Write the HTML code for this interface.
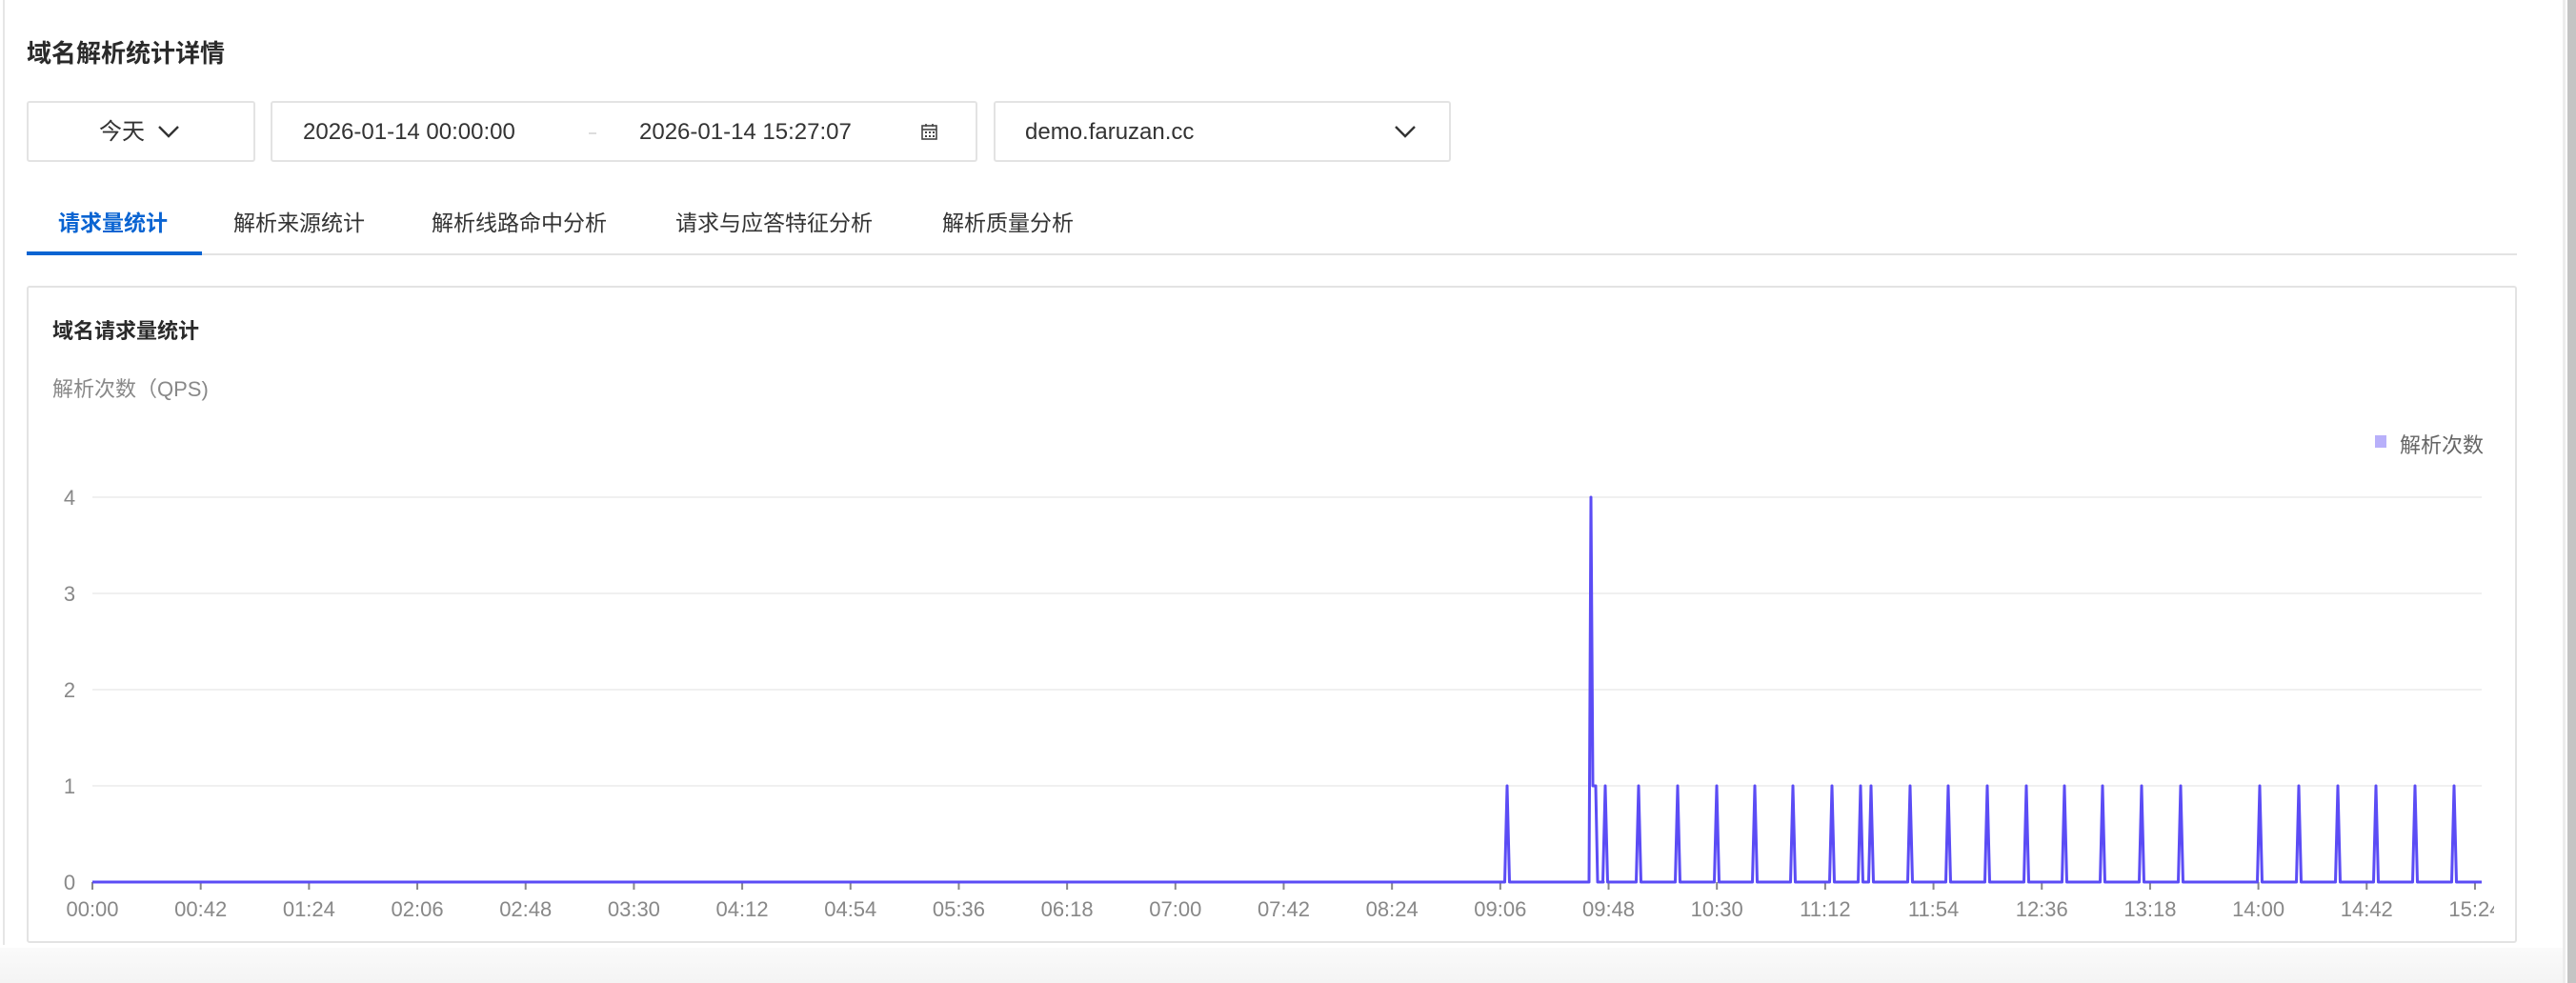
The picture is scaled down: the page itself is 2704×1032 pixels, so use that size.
<!DOCTYPE html>
<html><head><meta charset="utf-8"><style>
html,body{margin:0;padding:0;width:2704px;height:1032px;background:#fff;overflow:hidden;font-family:"Liberation Sans","Noto Sans CJK SC",sans-serif;}
.a{position:absolute;white-space:nowrap;}
.box{position:absolute;border:2px solid #e3e3e3;border-radius:3px;box-sizing:border-box;background:#fff;}
.t{position:absolute;white-space:nowrap;font-size:24px;color:#333;line-height:64px;top:107px;}
</style></head><body>
<div class="a" style="left:3px;top:0;width:2px;height:992px;background:#e6e6e6"></div>
<div class="a" style="left:2690px;top:0;width:3px;height:1032px;background:#ececec"></div>
<div class="a" style="left:2695px;top:0;width:9px;height:1032px;background:#c4c4c4"></div>
<div class="a" style="left:0;top:995px;width:2690px;height:37px;background:linear-gradient(#fafafa,#f4f4f4)"></div>

<div class="a" style="left:28px;top:36px;font-size:26px;font-weight:bold;color:#2a2a2a">域名解析统计详情</div>

<div class="box" style="left:28px;top:106px;width:240px;height:64px"></div>
<div class="t" style="left:104px;">今天</div>
<svg class="a" style="left:164px;top:128px" width="26" height="20"><path d="M3 5 L13 15 L23 5" fill="none" stroke="#333" stroke-width="2.4"/></svg>

<div class="box" style="left:284px;top:106px;width:742px;height:64px"></div>
<div class="t" style="left:318px;">2026-01-14 00:00:00</div>
<div class="a" style="left:618px;top:139px;width:8px;height:2px;background:#ddd"></div>
<div class="t" style="left:671px;">2026-01-14 15:27:07</div>
<svg class="a" style="left:966px;top:129px" width="20" height="20"><rect x="2" y="3" width="15" height="14" fill="none" stroke="#444" stroke-width="1.6"/><line x1="2" y1="7" x2="17" y2="7" stroke="#444" stroke-width="1.6"/><line x1="6" y1="1" x2="6" y2="4" stroke="#444" stroke-width="1.6"/><line x1="13" y1="1" x2="13" y2="4" stroke="#444" stroke-width="1.6"/><g fill="#444"><rect x="5" y="9" width="2" height="2"/><rect x="9" y="9" width="2" height="2"/><rect x="13" y="9" width="2" height="2"/><rect x="5" y="13" width="2" height="2"/><rect x="9" y="13" width="2" height="2"/><rect x="13" y="13" width="2" height="2"/></g></svg>

<div class="box" style="left:1043px;top:106px;width:480px;height:64px"></div>
<div class="t" style="left:1076px;">demo.faruzan.cc</div>
<svg class="a" style="left:1462px;top:128px" width="26" height="20"><path d="M3 5 L13 15 L23 5" fill="none" stroke="#333" stroke-width="2.4"/></svg>

<div class="a" style="left:61px;top:215px;font-size:23px;color:#0a64d2;font-weight:bold">请求量统计</div>
<div class="a" style="left:245px;top:215px;font-size:23px;color:#333">解析来源统计</div>
<div class="a" style="left:453px;top:215px;font-size:23px;color:#333">解析线路命中分析</div>
<div class="a" style="left:709px;top:215px;font-size:23px;color:#333">请求与应答特征分析</div>
<div class="a" style="left:989px;top:215px;font-size:23px;color:#333">解析质量分析</div>
<div class="a" style="left:28px;top:266px;width:2614px;height:2px;background:#e3e3e3"></div>
<div class="a" style="left:28px;top:264px;width:184px;height:4px;background:#0a64d2"></div>

<div class="box" style="left:28px;top:300px;width:2614px;height:690px"></div>
<div class="a" style="left:55px;top:330px;font-size:22px;font-weight:bold;color:#2a2a2a">域名请求量统计</div>
<div class="a" style="left:55px;top:391px;font-size:22px;color:#888">解析次数（QPS)</div>
<div class="a" style="left:2493px;top:457px;width:12px;height:13px;background:#b8b0fa"></div>
<div class="a" style="left:2519px;top:450px;font-size:22px;color:#666">解析次数</div>

<svg class="a" style="left:0;top:0" width="2704" height="1032">
<g stroke="#f0f0f0" stroke-width="2">
<line x1="97" y1="522" x2="2605" y2="522"/><line x1="97" y1="623" x2="2605" y2="623"/><line x1="97" y1="724" x2="2605" y2="724"/><line x1="97" y1="825" x2="2605" y2="825"/>
</g>
<g fill="#888" font-size="22" font-family="Liberation Sans,sans-serif" text-anchor="middle">
<text x="73" y="530">4</text><text x="73" y="631">3</text><text x="73" y="732">2</text><text x="73" y="833">1</text><text x="73" y="934">0</text>
</g>
<g id="ticks" stroke="#888" stroke-width="2"></g>
<g id="xl" fill="#888" font-size="22" font-family="Liberation Sans,sans-serif" text-anchor="middle"></g>
<polyline id="ln" fill="none" stroke="#5b4cf5" stroke-width="3" stroke-linejoin="round"/>
<rect x="2618" y="930" width="22" height="40" fill="#fff"/>
</svg>
<script>
var labels=["00:00","00:42","01:24","02:06","02:48","03:30","04:12","04:54","05:36","06:18","07:00","07:42","08:24","09:06","09:48","10:30","11:12","11:54","12:36","13:18","14:00","14:42","15:24"];
var t="",l="";
for(var i=0;i<labels.length;i++){var x=97+i*113.68;t+='<line x1="'+x+'" y1="926" x2="'+x+'" y2="934"/>';l+='<text x="'+x+'" y="962">'+labels[i]+'</text>';}
document.getElementById("ticks").innerHTML=t;document.getElementById("xl").innerHTML=l;
var sp=[1582,1685,1720,1761,1802,1842,1882,1923,1953,1964,2005,2045,2086,2127,2167,2207,2248,2289,2372,2413,2454,2494,2535,2576];
var pts=["97,926"];
for(var j=0;j<sp.length;j++){var x=sp[j];
 if(x==1685){pts.push("1668,926","1670,522","1672,825","1675,825","1677,926","1683,926");}
 pts.push((x-2.5)+",926",x+",825",(x+2.5)+",926");}
pts.push("2605,926");
document.getElementById("ln").setAttribute("points",pts.join(" "));
</script>
</body></html>
